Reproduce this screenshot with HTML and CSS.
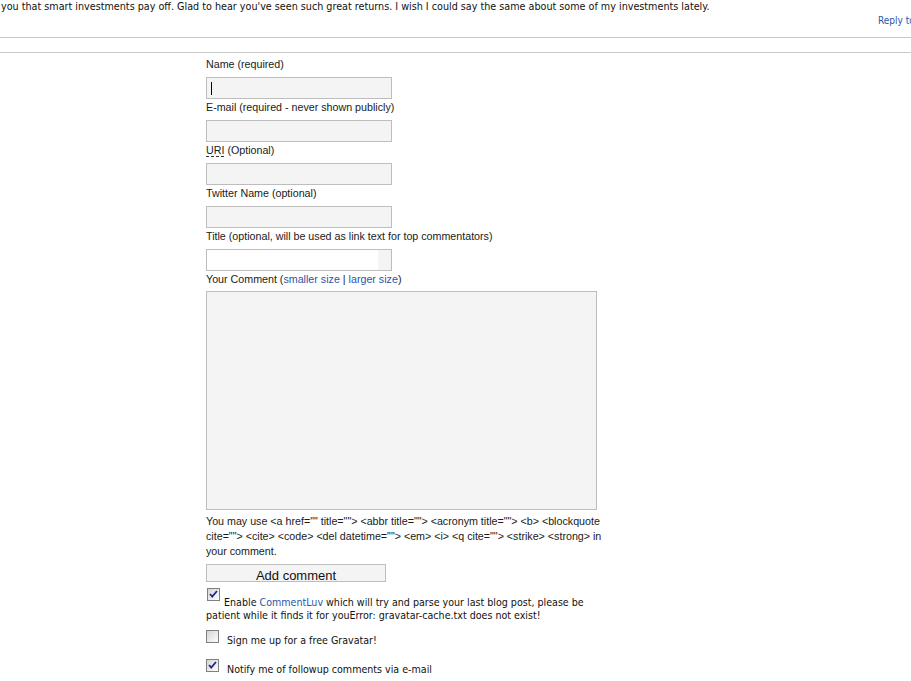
FILE: index.html
```html
<!DOCTYPE html>
<html>
<head>
<meta charset="utf-8">
<link rel="stylesheet" href="styles.css">
</head>
<body>
<div class="page">
  <p class="comment-text">you that smart investments pay off. Glad to hear you've seen such great returns. I wish I could say the same about some of my investments lately.</p>
  <div class="reply-row"><a class="reply-link" href="#">Reply to this comment</a></div>
  <div class="rule rule-first"></div>
  <div class="rule rule-second"></div>

  <form class="comment-form">
    <label class="field-label">Name (required)</label>
    <div class="input-box"><span class="caret"></span></div>
    <label class="field-label">E-mail (required - never shown publicly)</label>
    <div class="input-box"></div>
    <label class="field-label"><abbr class="abbr">URI</abbr> (Optional)</label>
    <div class="input-box"></div>
    <label class="field-label">Twitter Name (optional)</label>
    <div class="input-box"></div>
    <label class="field-label">Title (optional, will be used as link text for top commentators)</label>
    <div class="input-box input-white"></div>
    <label class="field-label">Your Comment (<a class="link" href="#">smaller size</a> | <a class="link" href="#">larger size</a>)</label>
    <div class="textarea-box"></div>
    <p class="allowed-tags">You may use &lt;a href="" title=""&gt; &lt;abbr title=""&gt; &lt;acronym title=""&gt; &lt;b&gt; &lt;blockquote cite=""&gt; &lt;cite&gt; &lt;code&gt; &lt;del datetime=""&gt; &lt;em&gt; &lt;i&gt; &lt;q cite=""&gt; &lt;strike&gt; &lt;strong&gt; in your comment.</p>
    <div class="submit-btn">Add comment</div>

    <p class="check-text"><span class="cb cb-inline"><svg width="13" height="13" viewBox="0 0 13 13"><defs><linearGradient id="g1" x1="0" y1="0" x2="1" y2="1"><stop offset="0" stop-color="#d6d3ce"/><stop offset="1" stop-color="#ffffff"/></linearGradient></defs><rect x="0.5" y="0.5" width="12" height="12" fill="url(#g1)" stroke="#808080"/><path d="M3 6 L5.2 8.6 L10 3" fill="none" stroke="#1c2a8c" stroke-width="1.8"/></svg></span> Enable <a class="link" href="#">CommentLuv</a> which will try and parse your last blog post, please be patient while it finds it for youError: gravatar-cache.txt does not exist!</p>
    <div class="check-row">
      <span class="cb"><svg width="13" height="13" viewBox="0 0 13 13"><defs><linearGradient id="g2" x1="0" y1="0" x2="1" y2="1"><stop offset="0" stop-color="#d6d3ce"/><stop offset="1" stop-color="#ffffff"/></linearGradient></defs><rect x="0.5" y="0.5" width="12" height="12" fill="url(#g2)" stroke="#808080"/></svg></span>
      <span class="check-label">Sign me up for a free Gravatar!</span>
    </div>
    <div class="check-row">
      <span class="cb"><svg width="13" height="13" viewBox="0 0 13 13"><defs><linearGradient id="g3" x1="0" y1="0" x2="1" y2="1"><stop offset="0" stop-color="#d6d3ce"/><stop offset="1" stop-color="#ffffff"/></linearGradient></defs><rect x="0.5" y="0.5" width="12" height="12" fill="url(#g3)" stroke="#808080"/><path d="M3 6 L5.2 8.6 L10 3" fill="none" stroke="#1c2a8c" stroke-width="1.8"/></svg></span>
      <span class="check-label">Notify me of followup comments via e-mail</span>
    </div>
  </form>
</div>
</body>
</html>
```

FILE: styles.css
```css
html, body {
  margin: 0;
  padding: 0;
  background: #fff;
  overflow: hidden;
}
.page {
  width: 911px;
  height: 681px;
  overflow: hidden;
}
.comment-text {
  margin: 0;
  padding-left: 1px;
  font: 10.7px/13px "DejaVu Sans Condensed", "DejaVu Sans", sans-serif;
  color: #111;
  white-space: nowrap;
}
.reply-row {
  margin-top: 2px;
  padding-left: 878px;
  height: 12px;
  white-space: nowrap;
  font: 10px/12px "DejaVu Sans Condensed", sans-serif;
}
.reply-link {
  color: #2a56a8;
  text-decoration: none;
}
.rule {
  height: 1px;
  background: #c8c8c8;
}
.rule-first {
  margin-top: 10px;
}
.rule-second {
  margin-top: 14px;
}
.comment-form {
  margin: 4px 0 0 206px;
  width: 400px;
  font: 10.7px/14px "Liberation Sans", Arial, sans-serif;
  color: #1a1a1a;
}
.field-label {
  display: block;
  height: 14px;
  white-space: nowrap;
}
.abbr {
  text-decoration: none;
  border-bottom: 1px dashed #333;
}
.link {
  color: #2a56a8;
  text-decoration: none;
}
.input-box {
  box-sizing: border-box;
  width: 186px;
  height: 22px;
  margin: 6px 0 1px;
  border: 1px solid #bdbdbd;
  background: #f4f4f4;
  position: relative;
}
.input-white {
  background: linear-gradient(to right, #fff 0, #fff 93%, #f4f4f4 93%);
}
.caret {
  position: absolute;
  left: 4px;
  top: 4px;
  width: 1px;
  height: 13px;
  background: #000;
}
.textarea-box {
  box-sizing: border-box;
  width: 391px;
  height: 219px;
  margin-top: 5px;
  border: 1px solid #bdbdbd;
  background: #f4f4f4;
}
.allowed-tags {
  margin: 4px 0 0;
  width: 397px;
  font: 10.7px/15px "Liberation Sans", Arial, sans-serif;
}
.submit-btn {
  box-sizing: border-box;
  width: 180px;
  height: 18px;
  margin-top: 5px;
  border: 1px solid #bdbdbd;
  background: #f4f4f4;
  font: 13px/22px "Liberation Sans", Arial, sans-serif;
  text-align: center;
  overflow: hidden;
  color: #111;
}
.check-text {
  margin: 6px 0 0;
  width: 385px;
  font: 10.6px/13px "DejaVu Sans Condensed", "DejaVu Sans", sans-serif;
  color: #111;
}
.check-row {
  display: flex;
  align-items: flex-start;
  gap: 8px;
  font: 10.6px/13px "DejaVu Sans Condensed", "DejaVu Sans", sans-serif;
  color: #111;
  margin-top: 8px;
}
.check-row + .check-row {
  margin-top: 12px;
}
.cb {
  display: inline-block;
  width: 13px;
  height: 13px;
  flex: none;
}
.cb-inline {
  vertical-align: 5px;
  margin-left: 1px;
  margin-right: 1px;
}
.cb svg {
  display: block;
}
.check-label {
  padding-top: 4px;
}
```
